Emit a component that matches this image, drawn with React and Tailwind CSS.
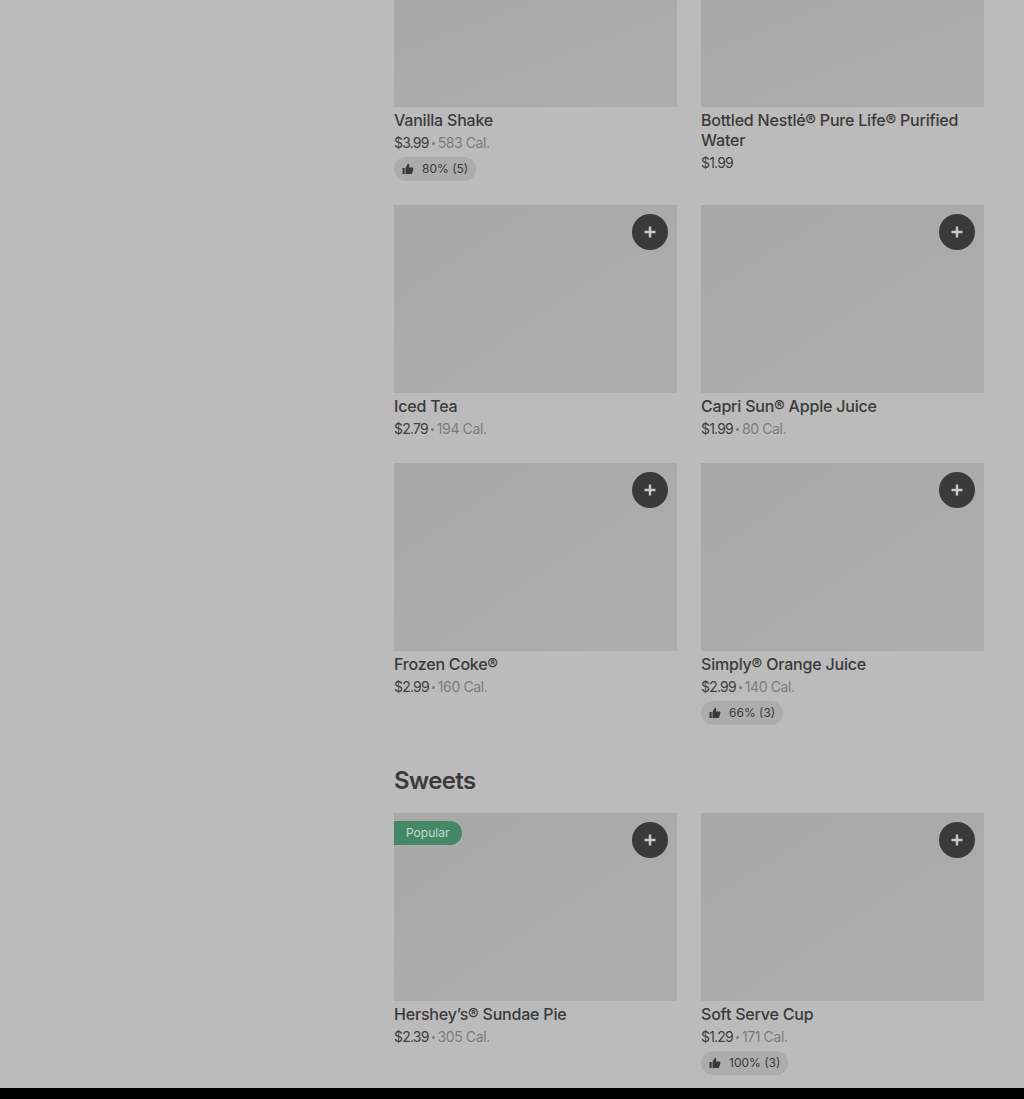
import React from 'react';

const FONT = "font-['Inter','Liberation_Sans',sans-serif]";

function ThumbIcon() {
  return (
    <svg viewBox="0 0 12 12" className="h-3 w-3 shrink-0 fill-[#3a3a3a]">
      <path d="M0.5 5h2.2v6H0.5z" />
      <path d="M3.5 5l2.3-4.2c.9 0 1.5.6 1.5 1.4L7 4.4h3.3c.8 0 1.3.7 1.1 1.4l-1.2 4.4c-.1.5-.6.8-1.1.8H3.5z" />
    </svg>
  );
}

function AddButton() {
  return (
    <button className="absolute right-[9px] top-[9px] flex h-9 w-9 items-center justify-center rounded-full bg-[#3a3a3a]">
      <svg viewBox="0 0 12 12" className="h-3 w-3 fill-[#c8c8c8]">
        <path d="M4.8 0.5h2.4v4.3h4.3v2.4H7.2v4.3H4.8V7.2H0.5V4.8h4.3z" />
      </svg>
    </button>
  );
}

function MenuItem({ item }) {
  return (
    <div>
      <div className={`relative w-full bg-gradient-to-br from-[#a8a8a8] to-[#adadad] ${item.cropped ? 'h-[107px]' : 'h-[188px]'}`}>
        {item.popular && (
          <span className="absolute left-0 top-2 flex h-6 w-[68px] items-center rounded-r-full bg-[#458867] pl-3 text-xs text-[#c4d9ce]">
            Popular
          </span>
        )}
        {!item.cropped && <AddButton />}
      </div>
      <h3 className="mt-[3px] text-base leading-5 font-medium tracking-[-0.2px] text-[#3a3a3a]">{item.name}</h3>
      <p className="mt-[3px] flex items-center text-sm leading-5">
        <span className="tracking-[-0.8px] text-[#3f3f3f]">{item.price}</span>
        {item.cal && (
          <>
            <span className="mx-[3px] h-[3px] w-[3px] rounded-full bg-[#7b7b7b]" />
            <span className="tracking-[-0.4px] text-[#7b7b7b]">{item.cal} Cal.</span>
          </>
        )}
      </p>
      {item.rating && (
        <div className="mt-1 inline-flex h-6 items-center gap-2 rounded-full bg-[#acacac] px-2 text-xs text-[#3a3a3a]">
          <ThumbIcon />
          <span>{item.rating}</span>
        </div>
      )}
    </div>
  );
}

const drinks = [
  { name: 'Vanilla Shake', price: '$3.99', cal: '583', rating: '80% (5)', cropped: true },
  { name: 'Bottled Nestlé® Pure Life® Purified Water', price: '$1.99', cropped: true },
  { name: 'Iced Tea', price: '$2.79', cal: '194' },
  { name: 'Capri Sun® Apple Juice', price: '$1.99', cal: '80' },
  { name: 'Frozen Coke®', price: '$2.99', cal: '160' },
  { name: 'Simply® Orange Juice', price: '$2.99', cal: '140', rating: '66% (3)' },
];

const sweets = [
  { name: 'Hershey’s® Sundae Pie', price: '$2.39', cal: '305', popular: true },
  { name: 'Soft Serve Cup', price: '$1.29', cal: '171', rating: '100% (3)' },
];

export default function App() {
  return (
    <div className={`min-h-[1099px] overflow-hidden bg-[#bbbbbb] ${FONT}`}>
      <div className="ml-[394px] mr-10 pb-[13px]">
        <div className="grid grid-cols-2 gap-6">
          {drinks.map(item => <MenuItem key={item.name} item={item} />)}
        </div>
        <h2 className="mt-[40px] mb-4 text-2xl leading-8 font-semibold tracking-[-0.6px] text-[#3a3a3a]">Sweets</h2>
        <div className="grid grid-cols-2 gap-6">
          {sweets.map(item => <MenuItem key={item.name} item={item} />)}
        </div>
      </div>
      <div className="h-[11px] bg-black" />
    </div>
  );
}
